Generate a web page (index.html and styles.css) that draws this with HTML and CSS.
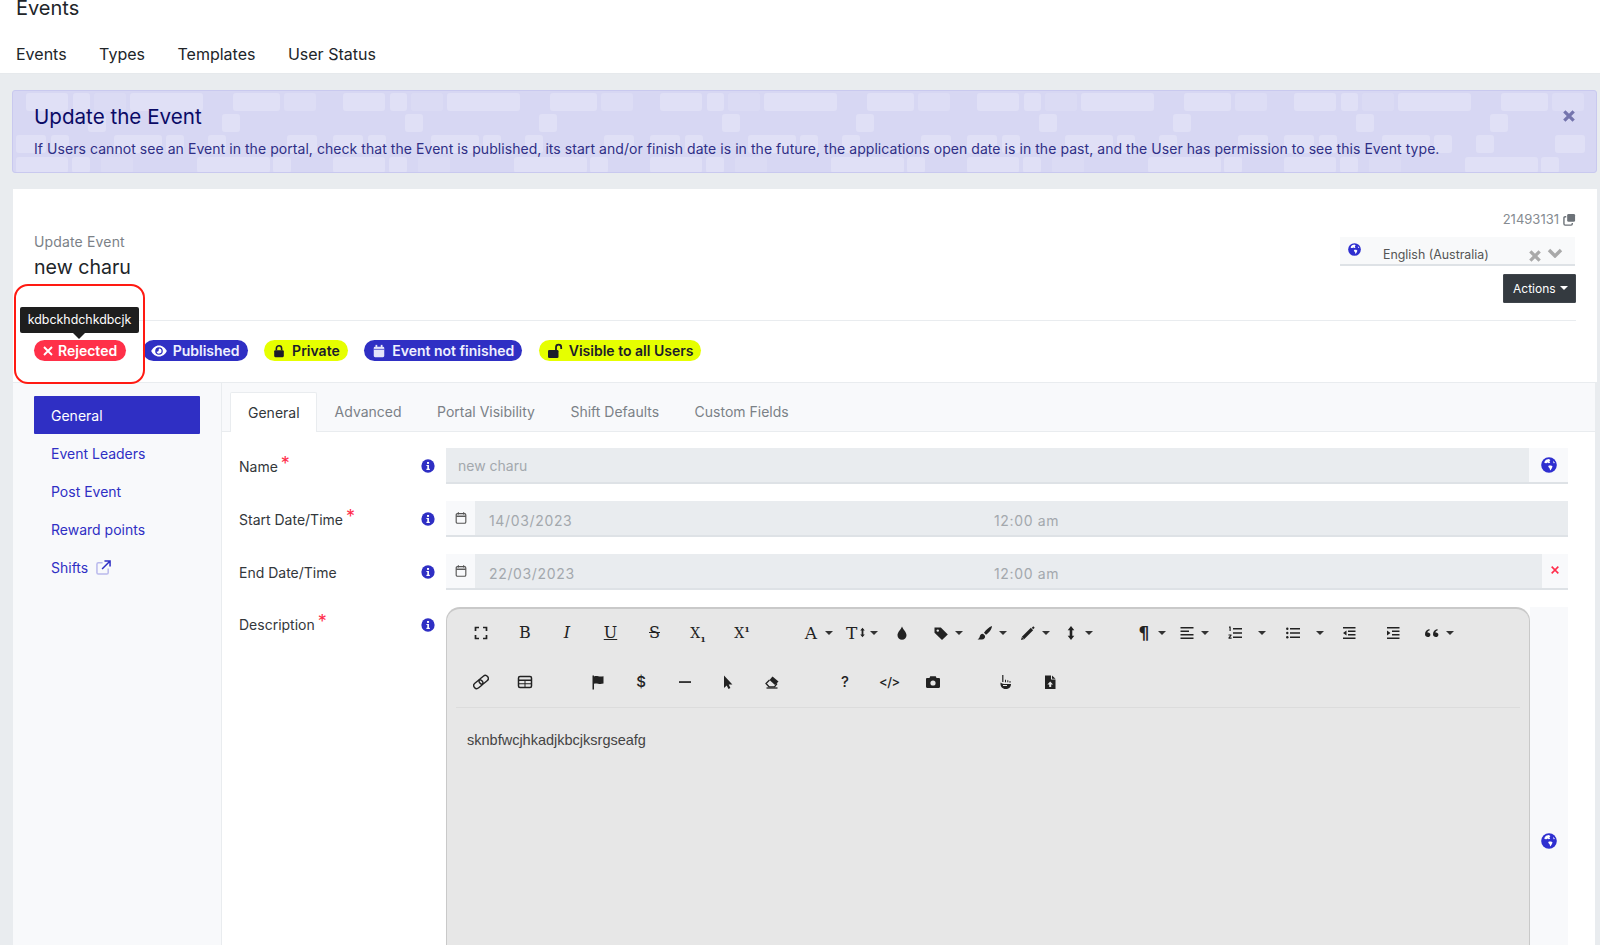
FILE: index.html
```html
<!DOCTYPE html>
<html lang="en">
<head>
<meta charset="utf-8">
<title>Update Event</title>
<link rel="stylesheet" href="styles.css">
</head>
<body>
<svg class="sprite" width="0" height="0" aria-hidden="true">
  <defs>
    <symbol id="globe" viewBox="0 0 16 16"><circle cx="8" cy="8" r="7.800" fill="#2f2fd0"/><path d="M5 2.800 7.800 1.900 9.400 3 8.400 4.400 9.200 5.800 7.600 6.300 6.800 5.400 5.400 6.300 3.400 6 3.600 4.400zM7.800 8.400 10.200 8.400 11.600 9.600 10.400 12 9.200 13.600 8.600 11.200 7.200 9.800zM12 3.800 14 6 12.600 6.200z" fill="#fff"/></symbol>
    <symbol id="info" viewBox="0 0 16 16"><circle cx="8" cy="8" r="7.600" fill="#2f2fc4"/><rect x="6.900" y="3.400" width="2.300" height="2.200" fill="#fff"/><path d="M6.200 6.800h2.900v4.400h1v1.300H6.200v-1.300h1V8.100h-1z" fill="#fff"/></symbol>
    <symbol id="cal" viewBox="0 0 16 16"><rect x="2.500" y="3" width="11" height="11" rx="1.500" fill="none" stroke="#555" stroke-width="1.300"/><path d="M2.500 6h11" stroke="#555" stroke-width="1.600"/><path d="M5 1.500v2.500M11 1.500v2.500" stroke="#555" stroke-width="1.300"/></symbol>
    <symbol id="expand" viewBox="0 0 16 16"><path d="M2.500 6V2.500H6M10 2.500h3.500V6M13.500 10v3.500H10M6 13.500H2.500V10" fill="none" stroke="#222" stroke-width="1.700"/></symbol>
    <symbol id="link" viewBox="0 0 16 16"><g fill="none" stroke="#222" stroke-width="1.400" transform="rotate(-40 8 8)"><rect x="-0.500" y="5" width="10" height="6" rx="3"/><rect x="6.500" y="5" width="10" height="6" rx="3"/></g></symbol>
    <symbol id="table" viewBox="0 0 16 16"><rect x="1.500" y="2.500" width="13" height="11" rx="1.500" fill="none" stroke="#222" stroke-width="1.500"/><path d="M1.500 5.500h13v1.500h-13zM1.500 9.300h13v1h-13zM7.500 6h1v7h-1z" fill="#222"/></symbol>
    <symbol id="flag" viewBox="0 0 16 16"><path d="M2.500 1.500H4v1c3-1.200 5 .8 9.500-.3v7.300c-4.500 1.300-6.500-.8-9.500.3v5.700H2.500z" fill="#222"/></symbol>
    <symbol id="minus" viewBox="0 0 16 16"><rect x="2" y="7.200" width="12" height="1.700" fill="#222"/></symbol>
    <symbol id="cursor" viewBox="0 0 16 16"><path d="M4 1.500v12.500l2.700-2.600 1.800 3.600 1.900-.9-1.700-3.500h3.700z" fill="#222"/></symbol>
    <symbol id="eraser" viewBox="0 0 16 16"><path d="M8.500 2.500 14.500 7.500 11 11 5.500 6z" fill="#222"/><path d="M5.500 6 2 9.500 5 12.800H10.500L13 9.500" fill="none" stroke="#222" stroke-width="1.300"/><path d="M2.500 14h11" stroke="#222" stroke-width="1.300"/></symbol>
    <symbol id="drop" viewBox="0 0 16 16"><path d="M8 1.500C7 4.500 3.500 7 3.500 10.200a4.500 4.500 0 0 0 9 0C12.500 7 9 4.500 8 1.500z" fill="#222"/></symbol>
    <symbol id="tag" viewBox="0 0 16 16"><path d="M1.500 2.500h6.300l7 7-5.800 5.500-7.500-7.200z" fill="#222"/><circle cx="4.800" cy="5.600" r="1.200" fill="#e7e7e7"/></symbol>
    <symbol id="brush" viewBox="0 0 16 16"><path d="M15 1c-3 1-6 3.800-8 6.800l2 2c3-2 5.800-5.500 6-8.800zM6 8.800c-2.500 0-3 1.700-3.300 3C2.500 13 1.500 13.800.5 14.500h4.300c2.400 0 3.700-1.700 3.200-3.700z" fill="#222"/></symbol>
    <symbol id="pencil" viewBox="0 0 16 16"><path d="M3 13 12 4" stroke="#222" stroke-width="3.200"/><path d="M12.500 3.500 14 2" stroke="#222" stroke-width="2"/><path d="M1 15l.8-3 2.200 2.200z" fill="#222"/></symbol>
    <symbol id="vert" viewBox="0 0 16 16"><path d="M8 1 11.300 5.200H9.300V10.800H11.300L8 15 4.700 10.800H6.700V5.200H4.700z" fill="#222"/></symbol>
    <symbol id="align" viewBox="0 0 16 16"><path d="M1.500 2h13v1.500h-13zM1.500 5.500h8.500v1.500h-8.500zM1.500 9h13v1.500h-13zM1.500 12.500h13v1.500h-13z" fill="#222"/></symbol>
    <symbol id="ol" viewBox="0 0 16 16"><path d="M6 3h9v1.500H6zM6 7.300h9v1.500H6zM6 11.600h9v1.500H6zM2 1.500h1.700v4.500h-1.200V2.800H2zM1.500 9.500h3v1.200l-1.600 1.800h1.700v1.200H1.500v-1.200l1.700-1.900H1.500z" fill="#222"/></symbol>
    <symbol id="ul" viewBox="0 0 16 16"><path d="M5 3h10v1.500H5zM5 7.300h10v1.500H5zM5 11.600h10v1.500H5z" fill="#222"/><circle cx="2.300" cy="3.700" r="1.200" fill="#222"/><circle cx="2.300" cy="8" r="1.200" fill="#222"/><circle cx="2.300" cy="12.300" r="1.200" fill="#222"/></symbol>
    <symbol id="outdent" viewBox="0 0 16 16"><path d="M2 2h12.500v1.500H2zM7 5.500h7.500V7H7zM7 9h7.500v1.500H7zM2 12.500h12.500V14H2zM5.500 5.500V10.500L2 8z" fill="#222"/></symbol>
    <symbol id="indent" viewBox="0 0 16 16"><path d="M2 2h12.500v1.500H2zM7 5.500h7.500V7H7zM7 9h7.500v1.500H7zM2 12.500h12.500V14H2zM2 5.500V10.500L5.500 8z" fill="#222"/></symbol>
    <symbol id="quote" viewBox="0 0 16 16"><path d="M1 9.200C1 6.500 2.800 4.500 5.500 4v1.600C4.200 6 3.500 6.700 3.400 7.500c1.500-.4 3 .6 3 2.200S5.200 12 3.800 12 1 11 1 9.200zM9 9.200C9 6.500 10.800 4.500 13.500 4v1.600c-1.300.4-2 1.100-2.100 1.900 1.500-.4 3 .6 3 2.200s-1.200 2.300-2.600 2.300S9 11 9 9.200z" fill="#222"/></symbol>
    <symbol id="camera" viewBox="0 0 16 16"><path d="M1 5.200C1 4.500 1.500 4 2.200 4h2.300l.7-1.700h5.600l.7 1.700h2.300c.7 0 1.200.5 1.200 1.200v7.600c0 .7-.5 1.200-1.200 1.200H2.200C1.500 14 1 13.500 1 12.800z" fill="#222"/><circle cx="8" cy="9" r="2.600" fill="#e7e7e7"/></symbol>
    <symbol id="hand" viewBox="0 0 16 16"><path d="M4.200 1h1.200v7H4.200zM7 5.800h1v2.400H7zM9.300 6.300h1v2H9.300zM11.500 7h1v1.800h-1z" fill="#222"/><path d="M2.500 8.500c1.500 1.200 3 1.500 5 1.500h5.500c0 3-2 5-5.500 5-3 0-5-2.500-5-5z" fill="#222"/><path d="M5 11.500h4" stroke="#e7e7e7" stroke-width="1"/></symbol>
    <symbol id="file" viewBox="0 0 16 16"><path d="M3 1.500h6v4h4.500v9.500H3zM10 1.500l3.500 3.300H10z" fill="#222"/><path d="M8.200 7.500 11 10.500H9.200V13H7.200V10.500H5.400z" fill="#e7e7e7"/></symbol>
    <symbol id="x" viewBox="0 0 12 12"><path d="M2 2 10 10M10 2 2 10" fill="none" stroke="currentColor" stroke-width="1.900"/></symbol>
    <symbol id="xbold" viewBox="0 0 12 12"><path d="M2 2 10 10M10 2 2 10" fill="none" stroke="currentColor" stroke-width="2.800"/></symbol>
    <symbol id="eye" viewBox="0 0 16 16"><path d="M8 2.500C4.500 2.500 1.500 5 .2 8 1.500 11 4.500 13.500 8 13.500s6.500-2.500 7.800-5.500C14.500 5 11.500 2.500 8 2.500z" fill="#fff"/><circle cx="8" cy="8" r="3.800" fill="#2f2fc4"/><path d="M8 5.400A2.600 2.600 0 1 1 5.500 8.700 1.600 1.600 0 0 0 7.600 6.600 1.600 1.600 0 0 0 8 5.400z" fill="#fff"/></symbol>
    <symbol id="lock" viewBox="0 0 16 16"><path d="M5 7V5a3 3 0 0 1 6 0v2" fill="none" stroke="#1c1c2a" stroke-width="1.800"/><rect x="2.500" y="7" width="11" height="8" rx="1.300" fill="#1c1c2a"/></symbol>
    <symbol id="unlock" viewBox="0 0 16 16"><path d="M9 7V4.300a2.600 2.600 0 0 1 5.200 0V6" fill="none" stroke="#1c1c2a" stroke-width="1.800"/><rect x="1" y="7" width="10.500" height="8" rx="1.300" fill="#1c1c2a"/></symbol>
    <symbol id="calfill" viewBox="0 0 16 16"><rect x="2" y="3" width="12" height="12" rx="1.500" fill="#e4e4fa"/><rect x="4" y="1" width="2" height="3" fill="#e4e4fa"/><rect x="10" y="1" width="2" height="3" fill="#e4e4fa"/><rect x="2" y="5.600" width="12" height=".8" fill="#2f2fc4"/></symbol>
    <symbol id="copy" viewBox="0 0 14 14"><rect x="4.500" y="1" width="8.500" height="8.500" rx="1.500" fill="#6c7278"/><path d="M3.500 4H2.300C1.600 4 1 4.600 1 5.300v6.400c0 .7.600 1.300 1.300 1.300h6.400c.7 0 1.300-.6 1.300-1.300v-1" fill="none" stroke="#6c7278" stroke-width="1.500"/></symbol>
    <symbol id="ext" viewBox="0 0 16 16"><path d="M7 3H2.500C1.700 3 1 3.700 1 4.500v9c0 .8.700 1.500 1.500 1.500h9c.8 0 1.500-.7 1.500-1.500V9" fill="none" stroke="#b9b9ec" stroke-width="1.600"/><path d="M9 1h6v6M15 1 6.500 9.500" fill="none" stroke="#2f2fc4" stroke-width="1.600"/></symbol>
    <pattern id="bricks" x="-13" y="-1" width="317" height="83" patternUnits="userSpaceOnUse">
      <g fill="#fff" fill-opacity=".22">
        <rect x="26" y="3" width="42" height="18" rx="3"/><rect x="73" y="3" width="17" height="18" rx="3"/><rect x="94" y="3" width="32" height="18" rx="3" fill-opacity=".1"/><rect x="130" y="3" width="73" height="18" rx="3"/><rect x="233" y="3" width="47" height="18" rx="3"/><rect x="284" y="3" width="32" height="18" rx="3" fill-opacity=".14"/>
        <rect x="88" y="24" width="18" height="18" rx="3"/><rect x="222" y="24" width="18" height="18" rx="3"/>
        <rect x="16" y="45" width="30" height="18" rx="3"/><rect x="51" y="45" width="18" height="18" rx="3"/><rect x="114" y="45" width="48" height="18" rx="3"/><rect x="166" y="45" width="18" height="18" rx="3"/><rect x="208" y="45" width="18" height="18" rx="3"/><rect x="287" y="45" width="30" height="18" rx="3"/>
        <rect x="16" y="67" width="52" height="16" rx="3"/><rect x="72" y="67" width="18" height="16" rx="3"/><rect x="101" y="67" width="32" height="16" rx="3" fill-opacity=".1"/><rect x="197" y="67" width="73" height="16" rx="3"/><rect x="273" y="67" width="18" height="16" rx="3"/>
      </g>
    </pattern>
  </defs>
</svg>

<div class="page">
  <header class="topbar">
    <h1 class="topbar-title">Events</h1>
    <nav class="topnav">
      <a>Events</a><a>Types</a><a>Templates</a><a>User Status</a>
    </nav>
  </header>

  <main class="main">
    <section class="banner">
      <svg class="banner-bg" width="100%" height="100%" aria-hidden="true"><rect width="100%" height="100%" fill="url(#bricks)"/></svg>
      <div class="banner-body">
        <h2 class="banner-title">Update the Event</h2>
        <p class="banner-text">If Users cannot see an Event in the portal, check that the Event is published, its start and/or finish date is in the future, the applications open date is in the past, and the User has permission to see this Event type.</p>
      </div>
      <svg class="banner-close"><use href="#xbold"/></svg>
    </section>

    <section class="card">
      <div class="card-head">
        <div class="head-row">
          <div class="head-left">
            <div class="eyebrow">Update Event</div>
            <div class="event-name">new charu</div>
          </div>
          <div class="head-right">
            <div class="id-line"><span>21493131</span><svg class="copy"><use href="#copy"/></svg></div>
            <div class="lang">
              <svg class="lang-globe"><use href="#globe"/></svg>
              <span class="lang-text">English (Australia)</span>
              <svg class="lang-x"><use href="#xbold"/></svg>
              <svg class="lang-chev" viewBox="0 0 16 10"><path d="M2 2l6 6 6-6" fill="none" stroke="#a9a9a9" stroke-width="3.400"/></svg>
            </div>
            <button class="actions">Actions<i class="caret caret-white"></i></button>
          </div>
        </div>
        <div class="badges">
          <span class="badge badge-red"><svg class="badge-x"><use href="#x"/></svg>Rejected</span>
          <span class="badge badge-blue"><svg class="badge-ic badge-ic-wide"><use href="#eye"/></svg>Published</span>
          <span class="badge badge-yellow"><svg class="badge-ic"><use href="#lock"/></svg>Private</span>
          <span class="badge badge-blue"><svg class="badge-ic"><use href="#calfill"/></svg>Event not finished</span>
          <span class="badge badge-yellow"><svg class="badge-ic badge-ic-wide"><use href="#unlock"/></svg>Visible to all Users</span>
        </div>
      </div>

      <div class="tooltip">kdbckhdchkdbcjk</div>
      <div class="annotation"></div>

      <div class="card-body">
        <aside class="side">
          <a class="side-item active">General</a>
          <a class="side-item">Event Leaders</a>
          <a class="side-item">Post Event</a>
          <a class="side-item">Reward points</a>
          <a class="side-item">Shifts<svg class="ext"><use href="#ext"/></svg></a>
        </aside>
        <div class="content">
          <div class="tabs">
            <a class="tab active">General</a>
            <a class="tab">Advanced</a>
            <a class="tab">Portal Visibility</a>
            <a class="tab">Shift Defaults</a>
            <a class="tab">Custom Fields</a>
          </div>
          <form class="form">
            <div class="row">
              <label class="label">Name<sup class="req">*</sup></label>
              <svg class="info"><use href="#info"/></svg>
              <div class="field">
                <div class="input"><span class="input-text">new charu</span></div>
                <div class="addon addon-globe"><svg class="globe"><use href="#globe"/></svg></div>
              </div>
            </div>
            <div class="row">
              <label class="label">Start Date/Time<sup class="req">*</sup></label>
              <svg class="info"><use href="#info"/></svg>
              <div class="field">
                <div class="addon addon-cal"><svg class="cal"><use href="#cal"/></svg></div>
                <div class="input input-date"><span class="date">14/03/2023</span><span>12:00 am</span></div>
              </div>
            </div>
            <div class="row">
              <label class="label">End Date/Time</label>
              <svg class="info"><use href="#info"/></svg>
              <div class="field">
                <div class="addon addon-cal"><svg class="cal"><use href="#cal"/></svg></div>
                <div class="input input-date"><span class="date">22/03/2023</span><span>12:00 am</span></div>
                <div class="addon addon-clear"><svg class="clear"><use href="#x"/></svg></div>
              </div>
            </div>
            <div class="row row-editor">
              <label class="label">Description<sup class="req">*</sup></label>
              <svg class="info"><use href="#info"/></svg>
              <div class="editor-wrap">
                <div class="editor">
                  <div class="toolbar">
                    <div class="tb-row tb-row-first">
                      <span class="tb w44"><svg class="ic"><use href="#expand"/></svg></span>
                      <span class="tb w42"><span class="ic gl">B</span></span>
                      <span class="tb"><span class="ic gl gl-i">I</span></span>
                      <span class="tb w44"><span class="ic gl gl-u">U</span></span>
                      <span class="tb"><span class="ic gl gl-s">S</span></span>
                      <span class="tb w44"><span class="ic gl gl-x">X<sub>1</sub></span></span>
                      <span class="tb w69"><span class="ic gl gl-x">X<sup>1</sup></span></span>
                      <span class="tb w38"><span class="ic gl gl-a">A</span><i class="caret"></i></span>
                      <span class="tb w53"><span class="ic ic-wide"><span class="gl gl-t">T</span><svg class="ic-small"><use href="#vert"/></svg></span><i class="caret caret-near"></i></span>
                      <span class="tb w39"><svg class="ic"><use href="#drop"/></svg></span>
                      <span class="tb w44"><svg class="ic"><use href="#tag"/></svg><i class="caret"></i></span>
                      <span class="tb w43"><svg class="ic"><use href="#brush"/></svg><i class="caret"></i></span>
                      <span class="tb w43"><svg class="ic"><use href="#pencil"/></svg><i class="caret"></i></span>
                      <span class="tb w73"><svg class="ic"><use href="#vert"/></svg><i class="caret"></i></span>
                      <span class="tb w43"><span class="ic gl gl-p">¶</span><i class="caret"></i></span>
                      <span class="tb w48"><svg class="ic"><use href="#align"/></svg><i class="caret"></i></span>
                      <span class="tb w58"><svg class="ic"><use href="#ol"/></svg><i class="caret caret-far"></i></span>
                      <span class="tb w56"><svg class="ic"><use href="#ul"/></svg><i class="caret caret-far"></i></span>
                      <span class="tb w44"><svg class="ic"><use href="#outdent"/></svg></span>
                      <span class="tb w39"><svg class="ic"><use href="#indent"/></svg></span>
                      <span class="tb"><svg class="ic"><use href="#quote"/></svg><i class="caret"></i></span>
                    </div>
                    <div class="tb-row">
                      <span class="tb w44"><svg class="ic"><use href="#link"/></svg></span>
                      <span class="tb w73"><svg class="ic"><use href="#table"/></svg></span>
                      <span class="tb w43"><svg class="ic"><use href="#flag"/></svg></span>
                      <span class="tb w44"><span class="ic gl gl-sans">$</span></span>
                      <span class="tb w43"><svg class="ic"><use href="#minus"/></svg></span>
                      <span class="tb w44"><svg class="ic"><use href="#cursor"/></svg></span>
                      <span class="tb w73"><svg class="ic"><use href="#eraser"/></svg></span>
                      <span class="tb w44"><span class="ic gl gl-sans">?</span></span>
                      <span class="tb w44"><span class="ic gl gl-code">&lt;/&gt;</span></span>
                      <span class="tb w73"><svg class="ic"><use href="#camera"/></svg></span>
                      <span class="tb w44"><svg class="ic"><use href="#hand"/></svg></span>
                      <span class="tb w44"><svg class="ic"><use href="#file"/></svg></span>
                    </div>
                  </div>
                  <div class="editor-text">sknbfwcjhkadjkbcjksrgseafg</div>
                </div>
                <div class="addon editor-addon"><svg class="globe"><use href="#globe"/></svg></div>
              </div>
            </div>
          </form>
        </div>
      </div>
    </section>
  </main>
</div>
</body>
</html>
```
FILE: styles.css
```css
* { box-sizing: border-box; }
html, body { margin: 0; padding: 0; height: 945px; overflow: hidden; }
body { font-family: Inter, "Liberation Sans", sans-serif; font-size: 14px; color: #33373b; background: #e9ecef; }
.sprite { position: absolute; }
.page { height: 945px; overflow: hidden; }

.topbar { background: #fff; height: 74px; padding-left: 16px; border-bottom: 1px solid #e6e9ec; }
.topbar-title { margin: 0; font-size: 20px; font-weight: 400; line-height: 17px; color: #212529; }
.topnav { display: flex; gap: 32.5px; margin-top: 27px; font-size: 16px; line-height: 20px; color: #212529; }

.main { padding: 16px 3px 0 12px; }

.banner { position: relative; display: flex; height: 83px; background: #d7d7f3; border: 1px solid #c9c9ef; border-radius: 3px; padding: 0 20px 0 21px; overflow: hidden; }
.banner-bg { position: absolute; left: 0; top: 0; }
.banner-body { position: relative; flex: 1; }
.banner-title { margin: 12px 0 0; font-size: 20.6px; font-weight: 400; line-height: 28px; color: #0a0a66; }
.banner-text { margin: 8px 0 0; font-size: 14px; line-height: 20px; letter-spacing: .056px; color: #2f2f86; }
.banner-close { position: relative; width: 14px; height: 14px; margin-top: 18px; color: #7474ad; }

.card { position: relative; margin-top: 16px; }
.card-head { background: #fff; margin-left: 1px; padding: 0 21px; border-bottom: 1px solid #e9ecef; }
.head-row { display: flex; justify-content: space-between; padding: 20px 0 17px; border-bottom: 1px solid #e9ecef; }
.head-left { padding-top: 23px; }
.eyebrow { font-size: 14px; line-height: 20px; letter-spacing: .15px; color: #7b8187; }
.event-name { font-size: 19.6px; line-height: 30px; color: #212529; }
.head-right { width: 235px; display: flex; flex-direction: column; align-items: flex-end; }
.id-line { display: flex; align-items: center; gap: 4px; height: 20px; font-size: 13px; color: #868b91; }
.copy { width: 13px; height: 13px; }
.lang { position: relative; display: flex; width: 100%; height: 29px; margin-top: 8px; margin-right: 1px; background: #f8f9fa; border-bottom: 2px solid #dee2e6; font-size: 12.4px; color: #555; }
.lang-globe { width: 13px; height: 13px; margin: 6px 0 0 8px; }
.lang-text { margin: 9px 0 0 22px; line-height: 18px; flex: 1; }
.lang-x { width: 14px; height: 14px; margin: 12px 1px 0 0; color: #a9a9a9; }
.lang-chev { width: 16px; height: 10px; margin: 11px 12px 0 4px; }
.actions { display: flex; align-items: center; gap: 4px; height: 29px; width: 73px; margin-top: 8px; padding: 0 0 0 9px; background: #343a40; border: 1px solid #3f454b; border-radius: 1px; color: #fff; font: 12px Inter, sans-serif; }

.caret { display: inline-block; width: 0; height: 0; border: 4px solid transparent; border-top-color: #333; border-bottom: 0; margin-left: 6px; vertical-align: middle; flex: none; }
.caret-white { border-top-color: #fff; margin-left: 0; margin-top: -2px; }

.badges { display: flex; gap: 16.5px; padding: 19px 0 21px; }
.badge { display: inline-flex; align-items: center; gap: 6px; height: 21px; padding: 0 8px; border-radius: 11px; font-size: 14px; font-weight: 600; line-height: 21px; }
.badge-red { background: #ff3049; color: #fff; gap: 4px; padding-right: 9px; }
.badge-blue { background: #2f2fc4; color: #f0f0ff; }
.badge-yellow { background: #e6ff00; color: #1c1c2a; }
.badge-x { width: 12px; height: 12px; color: #fff; }
.badge-ic { width: 14px; height: 14px; }
.badge-ic-wide { width: 16px; height: 16px; }

.tooltip { position: absolute; left: 8px; top: 118px; width: 119px; height: 26px; background: #1e1e1e; border-radius: 2px; color: #fff; font-size: 12.4px; line-height: 26px; text-align: center; }
.tooltip::after { content: ""; position: absolute; left: 53px; top: 26px; border: 6px solid transparent; border-top-color: #1e1e1e; border-bottom: 0; }
.annotation { position: absolute; left: 2px; top: 95px; width: 131px; height: 100px; border: 2px solid #ff1a12; border-radius: 14px; pointer-events: none; }

.card-body { display: flex; height: 600px; margin: 0 2px 0 1px; background: #fff; }
.side { width: 209px; flex: none; padding: 13px 21px 0; background: #f8f9fb; border-right: 1px solid #e9ecef; }
.side-item { display: flex; align-items: center; height: 38px; padding-left: 17px; color: #2f2fc4; font-size: 14px; }
.side-item.active { background: #2f2fc4; color: #fff; border-radius: 1px; }
.ext { width: 15px; height: 15px; margin-left: 8px; }

.content { flex: 1; min-width: 0; }
.tabs { display: flex; height: 49px; padding: 9px 0 0 8px; background: #f8f9fb; border-bottom: 1px solid #e9ecef; }
.tab { height: 40px; padding: 0 17.500px 0 18px; line-height: 40px; color: #7b8187; }
.tab.active { background: #fff; border: 1px solid #e9ecef; border-bottom: 0; border-radius: 2px 2px 0 0; padding: 0 16px 0 17px; color: #33373b; line-height: 39px; }

.form { display: flex; flex-direction: column; gap: 17px; padding: 16px 27px 0 17px; }
.row { display: flex; height: 36px; }
.row-editor { height: 468px; }
.label { width: 182px; flex: none; line-height: 38px; color: #33373b; }
.row-editor .label { line-height: 36px; }
.req { color: #ff2d4b; font-size: 18px; line-height: 0; margin-left: 3px; vertical-align: 2px; }
.info { width: 14px; height: 14px; flex: none; margin: 11px 11px 0 0; }
.field { flex: 1; display: flex; min-width: 0; }
.input { flex: 1; background: #e9ecef; border-bottom: 2px solid #dee2e6; color: #a3a8ad; line-height: 35px; padding-left: 12px; }
.input-date { display: flex; padding-left: 14px; line-height: 39px; letter-spacing: .65px; }
.date { width: 505px; }
.addon { background: #f8f9fb; border-bottom: 2px solid #dee2e6; display: flex; align-items: center; justify-content: center; flex: none; }
.addon-globe { width: 39px; }
.addon-cal { width: 29px; }
.addon-clear { width: 26px; padding-bottom: 2px; }
.globe { width: 16px; height: 16px; }
.cal { width: 14px; height: 14px; }
.clear { width: 10px; height: 10px; color: #ff2d4b; }

.editor-wrap { flex: 1; display: flex; min-width: 0; }
.editor { flex: 1; background: #e7e7e7; border: 1px solid #c9c9c9; border-top-width: 2px; border-bottom: 0; border-radius: 14px 14px 0 0; }
.editor-addon { width: 38px; border-bottom: 0; }
.toolbar { margin: 0 9px; padding-left: 17px; border-bottom: 1px solid #dcdcdc; height: 99px; }
.tb-row { display: flex; height: 51px; align-items: center; }
.tb-row-first { height: 47px; }
.tb { display: flex; align-items: center; width: 43.500px; flex: none; height: 20px; }
.w38 { width: 38px; }
.w39 { width: 39px; }
.w42 { width: 42px; }
.w43 { width: 43px; }
.w44 { width: 44px; }
.w48 { width: 48px; }
.w53 { width: 53px; }
.w56 { width: 56px; }
.w58 { width: 58px; }
.w69 { width: 69px; }
.w73 { width: 73px; }
.ic { display: block; width: 16px; height: 16px; flex: none; }
.ic-wide { display: flex; align-items: center; width: 20px; height: 16px; flex: none; margin-left: 5px; }
.ic-small { width: 11px; height: 15px; flex: none; }
.gl { font-family: "DejaVu Serif", serif; font-size: 16px; line-height: 16px; text-align: center; color: #222; }
.gl-i { font-style: italic; }
.gl-u { text-decoration: underline; }
.gl-s { text-decoration: line-through; }
.gl-x { font-size: 14px; white-space: nowrap; }
.gl-x sub, .gl-x sup { font-size: 8px; line-height: 0; font-weight: 700; }
.gl-a { font-size: 17px; }
.gl-t { font-size: 17px; line-height: 16px; }
.gl-p { font-family: "DejaVu Sans", sans-serif; font-weight: 700; font-size: 17px; }
.gl-sans { font-family: Inter, sans-serif; font-weight: 500; font-size: 15px; }
.gl-code { font-family: Inter, sans-serif; font-weight: 500; font-size: 13px; white-space: nowrap; letter-spacing: -.5px; margin-left: -2px; }
.caret-far { margin-left: 15px; }
.caret-near { margin-left: 4px; }
.editor-text { padding: 24px 20px; font-family: "Liberation Sans", Arial, sans-serif; font-size: 14.500px; line-height: 16px; color: #444; }
```
